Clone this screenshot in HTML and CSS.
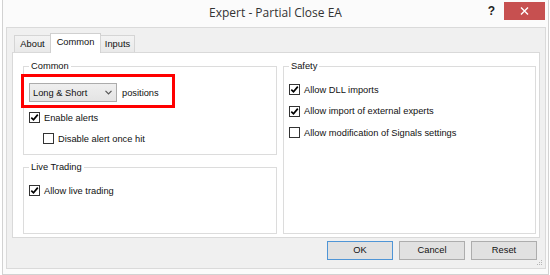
FILE: index.html
```html
<!DOCTYPE html>
<html>
<head>
<meta charset="utf-8">
<link rel="stylesheet" href="styles.css">
</head>
<body>
<div class="window">
  <div class="titlebar">
    <div class="title">Expert - Partial Close EA</div>
    <div class="controls">
      <span class="help">?</span>
      <span class="close"><svg width="9" height="8" viewBox="0 0 9 8"><path d="M1 0.5 L8 7.5 M8 0.5 L1 7.5" stroke="#fff" stroke-width="1.4"/></svg></span>
    </div>
  </div>
  <div class="client">
    <div class="tabs">
      <div class="tab tab-about">About</div>
      <div class="tab tab-common active">Common</div>
      <div class="tab tab-inputs">Inputs</div>
    </div>
    <div class="panel">
      <div class="col-left">
        <div class="group group-common">
          <div class="gtitle">Common</div>
          <div class="select-row">
            <div class="select">
              <span>Long &amp; Short</span>
              <svg width="7" height="5" viewBox="0 0 7 5"><path d="M0.5 0.8 L3.5 3.8 L6.5 0.8" fill="none" stroke="#555" stroke-width="1.2"/></svg>
            </div>
            <span class="select-label">positions</span>
          </div>
          <div class="row"><span class="cb checked"><svg width="9" height="9" viewBox="0 0 9 9"><path d="M1.3 4.6 L3.5 6.8 L7.8 1.6" fill="none" stroke="#000" stroke-width="1.7"/></svg></span>Enable alerts</div>
          <div class="row indent"><span class="cb"></span>Disable alert once hit</div>
          <div class="highlight"></div>
        </div>
        <div class="group group-live">
          <div class="gtitle">Live Trading</div>
          <div class="row first"><span class="cb checked"><svg width="9" height="9" viewBox="0 0 9 9"><path d="M1.3 4.6 L3.5 6.8 L7.8 1.6" fill="none" stroke="#000" stroke-width="1.7"/></svg></span>Allow live trading</div>
        </div>
      </div>
      <div class="col-right">
        <div class="group group-safety">
          <div class="gtitle">Safety</div>
          <div class="rows">
            <div class="row"><span class="cb checked"><svg width="9" height="9" viewBox="0 0 9 9"><path d="M1.3 4.6 L3.5 6.8 L7.8 1.6" fill="none" stroke="#000" stroke-width="1.7"/></svg></span>Allow DLL imports</div>
            <div class="row"><span class="cb checked"><svg width="9" height="9" viewBox="0 0 9 9"><path d="M1.3 4.6 L3.5 6.8 L7.8 1.6" fill="none" stroke="#000" stroke-width="1.7"/></svg></span>Allow import of external experts</div>
            <div class="row"><span class="cb"></span>Allow modification of Signals settings</div>
          </div>
        </div>
      </div>
    </div>
    <div class="buttons">
      <div class="btn default">OK</div>
      <div class="btn">Cancel</div>
      <div class="btn">Reset</div>
    </div>
    <svg class="grip" width="6" height="6" viewBox="0 0 6 6"><g fill="#b5b5b5"><rect x="4" y="0" width="1" height="1"/><rect x="2" y="2" width="1" height="1"/><rect x="4" y="2" width="1" height="1"/><rect x="0" y="4" width="1" height="1"/><rect x="2" y="4" width="1" height="1"/><rect x="4" y="4" width="1" height="1"/></g></svg>
  </div>
</div>
</body>
</html>
```
FILE: styles.css
```css
* { box-sizing: border-box; }
body {
  margin: 0;
  background: #fff;
  font-family: "Liberation Sans", Arial, sans-serif;
  font-size: 9.3px;
  color: #111;
}
.window {
  margin-left: 2px;
  width: 547px;
  height: 275px;
  border: 1px solid #d2d2d2;
  border-top: none;
  background: #fbfbfb;
}
.titlebar {
  height: 27px;
  display: grid;
  grid-template-columns: 1fr auto 1fr;
}
.title {
  grid-column: 2;
  font-family: "Open Sans", "Liberation Sans", sans-serif;
  font-size: 12px;
  color: #333;
  padding-top: 5px;
  line-height: 16px;
  white-space: nowrap;
}
.controls {
  grid-column: 3;
  justify-self: end;
  display: flex;
  align-items: flex-start;
}
.help {
  margin-top: 5px;
  margin-right: 9px;
  font-family: "Liberation Sans", sans-serif;
  font-weight: bold;
  font-size: 12px;
  line-height: 13px;
  color: #222;
}
.close {
  margin-top: 2px;
  margin-right: 3px;
  width: 41px;
  height: 18px;
  background: #c75050;
  display: flex;
  align-items: center;
  justify-content: center;
}
.client {
  margin: 0 2px 0 3px;
  height: 242px;
  border: 1px solid #dadada;
  background: #f0f0f0;
  padding: 0 5px;
  position: relative;
}
.tabs {
  display: flex;
  align-items: flex-end;
  height: 20px;
  margin-top: 5px;
  margin-bottom: -1px;
  padding-left: 2px;
  position: relative;
  z-index: 1;
}
.tab {
  height: 17px;
  margin-bottom: 1px;
  border: 1px solid #d5d5d5;
  border-bottom: none;
  background: linear-gradient(#f3f3f3, #e9e9e9);
  text-align: center;
  line-height: 16px;
}
.tab-about { width: 37px; }
.tab-common { width: 51px; margin-left: -1px; }
.tab-inputs { width: 35px; margin-left: -1px; }
.tab.active {
  height: 20px;
  margin-bottom: 0;
  background: #fff;
  line-height: 16px;
  border-color: #d0d0d0;
}
.panel {
  height: 186px;
  border: 1px solid #d9d9d9;
  background: #fff;
  display: flex;
  gap: 6px;
  padding: 13px 3px 0 10px;
}
.col-left {
  width: 254px;
  display: flex;
  flex-direction: column;
}
.col-right {
  flex: 1;
}
.group {
  border: 1px solid #dcdcdc;
  position: relative;
  padding: 0 5px;
}
.group-common { height: 89px; }
.group-live { height: 67px; margin-top: 12px; }
.group-safety { height: 168px; }
.gtitle {
  margin-top: -7px;
  height: 13px;
  line-height: 13px;
  width: fit-content;
  padding: 0 2px;
  background: #fff;
}
.select-row {
  display: flex;
  align-items: center;
  margin-top: 10px;
}
.select {
  width: 88px;
  height: 19px;
  border: 1px solid #acacac;
  background: linear-gradient(#efefef, #e4e4e4);
  display: flex;
  align-items: center;
  justify-content: space-between;
  padding: 0 4px 0 3px;
}
.select-label { margin-left: 5px; }
.row {
  display: flex;
  align-items: center;
  height: 21px;
}
.group-common .row:first-of-type { margin-top: 5px; }
.select-row + .row { margin-top: 5px; }
.row.indent { padding-left: 14px; }
.row.first { margin-top: 6px; }
.rows {
  margin-top: 6px;
  display: flex;
  flex-direction: column;
  gap: 0.5px;
}
.cb {
  width: 11px;
  height: 11px;
  border: 1px solid #333;
  background: #fff;
  margin-right: 4px;
  display: flex;
  align-items: center;
  justify-content: center;
  flex: none;
}
.highlight {
  position: absolute;
  left: -3px;
  top: 7px;
  width: 154px;
  height: 34px;
  border: 3px solid #ff0000;
}
.buttons {
  display: flex;
  justify-content: flex-end;
  gap: 6px;
  margin-top: 3px;
  padding-right: 3px;
}
.btn {
  width: 66px;
  height: 19px;
  border: 1px solid #adadad;
  background: #e1e1e1;
  text-align: center;
  line-height: 17px;
}
.btn.default { border-color: #4f95d6; }
.grip {
  position: absolute;
  right: 2px;
  bottom: 2px;
}
```
